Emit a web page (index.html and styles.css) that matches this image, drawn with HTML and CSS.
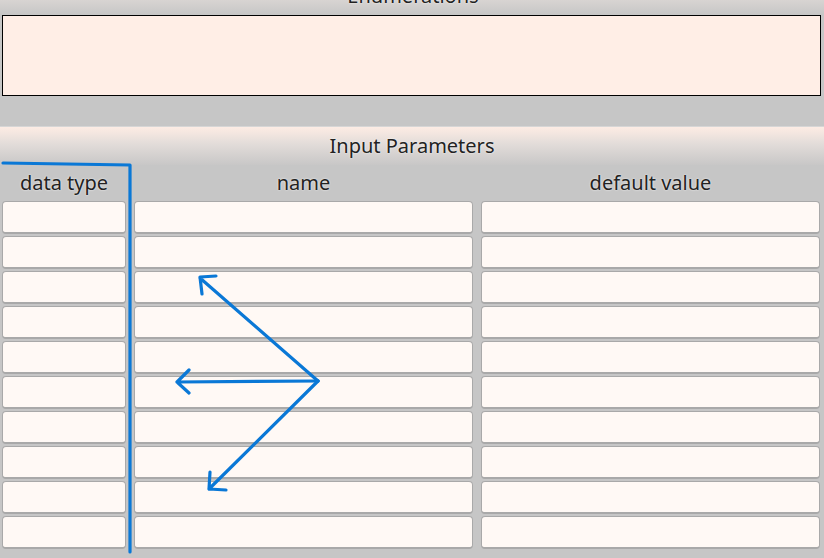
FILE: index.html
```html
<!DOCTYPE html>
<html>
<head>
<meta charset="utf-8">
<link rel="stylesheet" href="styles.css">
</head>
<body>
<div class="page">
  <div class="enum-title"><span>Enumerations</span></div>
  <div class="enum-box"></div>
  <div class="gap"></div>
  <div class="section-header">Input Parameters</div>
  <div class="grid">
    <div class="col-head">data type</div>
    <div class="col-head">name</div>
    <div class="col-head">default value</div>
    <input class="cell"><input class="cell"><input class="cell">
    <input class="cell"><input class="cell"><input class="cell">
    <input class="cell"><input class="cell"><input class="cell">
    <input class="cell"><input class="cell"><input class="cell">
    <input class="cell"><input class="cell"><input class="cell">
    <input class="cell"><input class="cell"><input class="cell">
    <input class="cell"><input class="cell"><input class="cell">
    <input class="cell"><input class="cell"><input class="cell">
    <input class="cell"><input class="cell"><input class="cell">
    <input class="cell"><input class="cell"><input class="cell">
  </div>
  <svg class="annot" width="824" height="558" viewBox="0 0 824 558">
    <g fill="none" stroke="#0a78d6" stroke-width="3.2" stroke-linecap="round" stroke-linejoin="round">
      <path d="M3 163 L130 165 L130 552"/>
      <path d="M318 381 L200 278 M216 276 L200 277 L202 294"/>
      <path d="M318 381 L177 382 M189 370 L177 382 L189 393"/>
      <path d="M318 381 L209 489 M226 490 L209 489 L210 472"/>
    </g>
  </svg>
</div>
</body>
</html>
```
FILE: styles.css
```css
html, body {
  margin: 0;
  padding: 0;
}
body {
  background: #c6c6c6;
  font-family: "Noto Sans", "Open Sans", sans-serif;
  color: #222;
}
.page {
  position: relative;
  width: 824px;
  height: 558px;
  overflow: hidden;
}
.enum-title {
  height: 15px;
  overflow: hidden;
  background: linear-gradient(#d8d4d2, #c6c6c6);
  text-align: center;
  font-size: 20px;
  line-height: 26px;
}
.enum-title span {
  display: block;
  margin-top: -17px;
  padding-left: 2px;
  text-shadow: 0 0 2px #fff;
}
.enum-box {
  height: 79px;
  margin: 0 3px 0 2px;
  border: 1px solid #000;
  background: #ffeee6;
}
.gap {
  height: 30px;
}
.section-header {
  height: 38px;
  border-top: 1px solid #d6d6d6;
  background: linear-gradient(#fdece4 0%, #e2dcd9 45%, #c8c7c7 100%);
  text-align: center;
  font-size: 20px;
  line-height: 38px;
  text-shadow: 0 0 2px #fff;
}
.grid {
  display: grid;
  grid-template-columns: 124px 1fr 1fr;
  grid-template-rows: 34px;
  grid-auto-rows: 33px;
  column-gap: 8px;
  row-gap: 2px;
  padding: 0 4px 0 2px;
}
.col-head {
  text-align: center;
  font-size: 20px;
  line-height: 36px;
  height: 34px;
  text-shadow: 0 0 2px #fff;
}
.cell {
  box-sizing: border-box;
  margin: 0;
  height: 33px;
  width: 100%;
  border: 1px solid #a9a9a9;
  border-bottom-width: 2px;
  border-radius: 4px;
  background: #fff9f5;
  outline: none;
}
.annot {
  position: absolute;
  left: 0;
  top: 0;
  pointer-events: none;
}
```
